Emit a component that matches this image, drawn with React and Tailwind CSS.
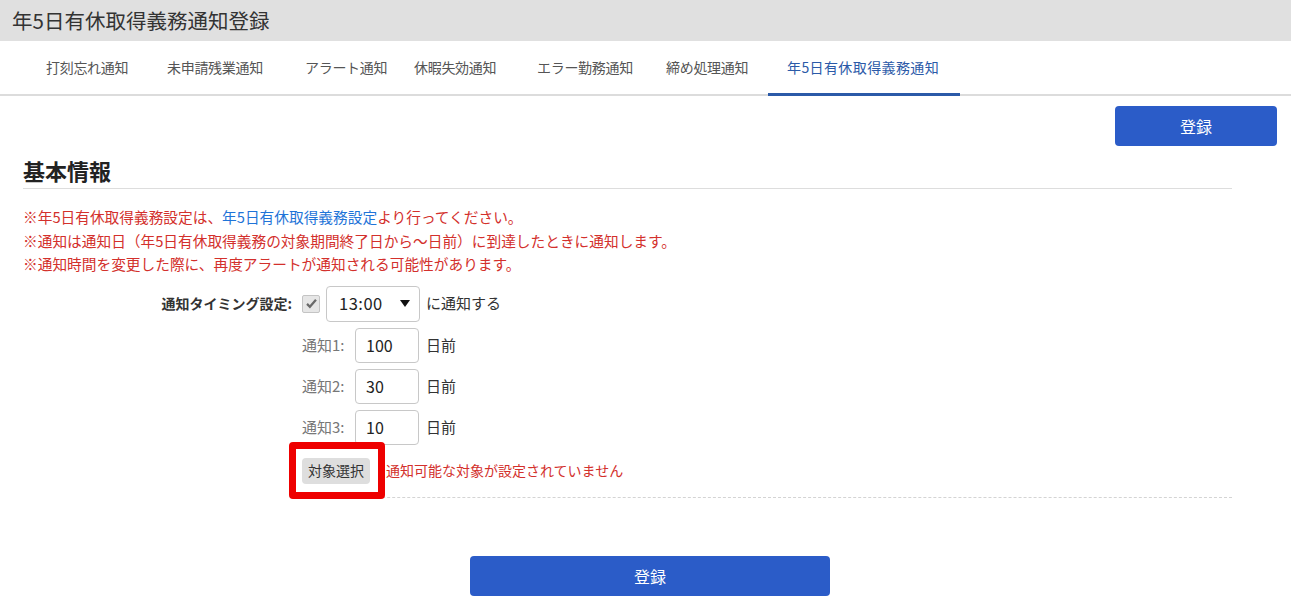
import React from "react";

const tabs = [
  { label: "打刻忘れ通知", w: "w-[121px]" },
  { label: "未申請残業通知", w: "w-[138px]" },
  { label: "アラート通知", w: "w-[109px]" },
  { label: "休暇失効通知", w: "w-[123px]" },
  { label: "エラー勤務通知", w: "w-[129px]" },
  { label: "締め処理通知", w: "w-[121px]" },
  { label: "年5日有休取得義務通知", w: "w-[192px]", active: true },
];

const notices = [
  { no: 1, days: "100" },
  { no: 2, days: "30" },
  { no: 3, days: "10" },
];

export default function App() {
  return (
    <div
      className="w-[1291px] min-h-[614px] bg-white text-[#333]"
      style={{ fontFamily: "'Noto Sans CJK JP', 'Noto Sans', sans-serif" }}
    >
      {/* Title bar */}
      <div className="h-[41px] bg-[#e0e0e0] pl-[12px] flex items-center">
        <h1 className="text-[20.5px] leading-none text-[#333]">年5日有休取得義務通知登録</h1>
      </div>

      {/* Tabs */}
      <nav className="h-[55px] flex pl-[27px] border-b-2 border-[#dcdcdc]">
        {tabs.map((t) => (
          <div
            key={t.label}
            className={`${t.w} shrink-0 pl-[19px] -mb-[2px] flex items-center whitespace-nowrap text-[14px] tracking-[-0.3px] border-b-[3px] ${
              t.active ? "border-[#2b5aa8] text-[#2b5aa8] tracking-[0.4px]" : "border-transparent text-[#555]"
            }`}
          >
            {t.label}
          </div>
        ))}
      </nav>

      {/* Top register button */}
      <div className="flex justify-end pr-[14px] pt-[10px]">
        <button className="w-[162px] h-[40px] rounded-[4px] bg-[#2b5cc8] text-white text-[16px]">
          登録
        </button>
      </div>

      <div className="pl-[23px] pr-[59px]">
        {/* Section heading */}
        <h2 className="mt-[10px] pb-[4px] border-b border-[#dddddd] text-[22px] leading-[28px] font-bold text-[#222]">
          基本情報
        </h2>

        {/* Notes */}
        <div className="mt-[16px] text-[14.7px] leading-[23.5px] text-[#d3302c]">
          <p>
            ※年5日有休取得義務設定は、
            <span className="text-[#1f74d8]">年5日有休取得義務設定</span>
            より行ってください。
          </p>
          <p>※通知は通知日（年5日有休取得義務の対象期間終了日から～日前）に到達したときに通知します。</p>
          <p>※通知時間を変更した際に、再度アラートが通知される可能性があります。</p>
        </div>

        {/* Form */}
        <div className="mt-[10px] flex">
          <div className="w-[269px] shrink-0 h-[36px] flex items-center justify-end text-[14px] font-bold text-[#333]">
            通知タイミング設定:
          </div>
          <div className="flex-1 pl-[10px] pb-[13px] border-b border-dashed border-[#d4d4d4]">
            {/* Timing */}
            <div className="flex items-center h-[36px]">
              <span className="w-[18px] h-[18px] rounded-[2px] border border-[#c4c4c4] bg-[#e6e6e6] flex items-center justify-center">
                <svg viewBox="0 0 16 16" className="w-[13px] h-[13px]">
                  <path d="M2.5 8.5 L6 12 L13.5 3.5" fill="none" stroke="#6a6a6a" strokeWidth="2.8" />
                </svg>
              </span>
              <div className="ml-[6px] w-[94px] h-[36px] rounded-[4px] border border-[#c8c8c8] flex items-center justify-between pl-[12px] pr-[9px]">
                <span className="text-[16.5px] tracking-[0.5px] text-[#222]">13:00</span>
                <svg viewBox="0 0 10 7" className="w-[10px] h-[7px]">
                  <path d="M0 0 H10 L5 7 Z" fill="#111" />
                </svg>
              </div>
              <span className="ml-[6px] text-[15px] text-[#333]">に通知する</span>
            </div>

            {/* Days before */}
            {notices.map((n) => (
              <div key={n.no} className="flex items-center h-[35px] mt-[6px]">
                <span className="w-[47px] text-[15px] text-[#777]">通知{n.no}:</span>
                <div className="ml-[6px] w-[64px] h-[35px] rounded-[4px] border border-[#c8c8c8] flex items-center pl-[10px] text-[16px] text-[#222]">
                  {n.days}
                </div>
                <span className="ml-[7px] text-[15px] text-[#333]">日前</span>
              </div>
            ))}

            {/* Target select */}
            <div className="relative flex items-center mt-[13px] h-[26px]">
              <button className="w-[68px] h-[26px] rounded-[4px] bg-[#dedede] text-[14px] text-[#333]">
                対象選択
              </button>
              <span className="ml-[16px] text-[14px] text-[#d3302c]">通知可能な対象が設定されていません</span>
              <div className="absolute left-[-13px] top-[-16px] w-[96px] h-[57px] border-[7px] border-[#ee0000] rounded-[4px] pointer-events-none" />
            </div>
          </div>
        </div>
      </div>

      {/* Bottom register button */}
      <div className="flex justify-center pl-[9px] mt-[58px] pb-[18px]">
        <button className="w-[360px] h-[40px] rounded-[4px] bg-[#2b5cc8] text-white text-[16px]">
          登録
        </button>
      </div>
    </div>
  );
}
